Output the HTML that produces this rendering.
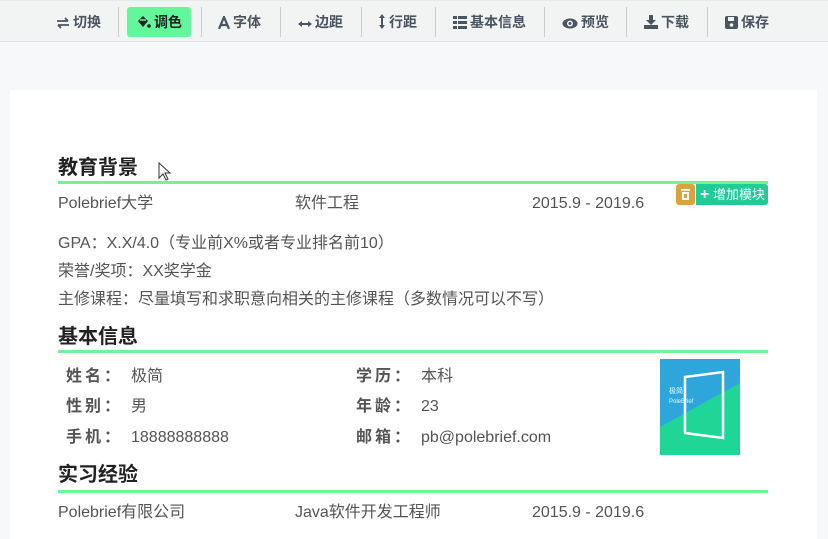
<!DOCTYPE html>
<html><head><meta charset="utf-8"><style>
*{margin:0;padding:0;box-sizing:border-box}
html,body{width:828px;height:539px;overflow:hidden}
body{background:#f7f8f9;font-family:"Liberation Sans","Noto Sans CJK SC",sans-serif;position:relative;color:#555}
.tb{position:absolute;left:0;top:0;width:828px;height:42px;background:#f2f4f3;border-bottom:1px solid #e2e4e4;border-top:1px solid #e8eaea}
.it{position:absolute;top:6px;height:30px;line-height:30px;font-size:14px;font-weight:bold;color:#4a5560;white-space:nowrap}
.it svg{vertical-align:-2px;margin-right:3px}
.sep{position:absolute;top:6px;width:1px;height:30px;background:#c9cdcd}
.act{background:#62f79a;border-radius:3px;color:#222;padding:0 9px}
.page{position:absolute;left:10px;top:90px;width:807px;height:449px;background:#fff}
.a{position:absolute;white-space:nowrap}
.h{font-size:20px;font-weight:bold;color:#222;left:58px;line-height:24px}
.line{position:absolute;left:58px;width:710px;height:3px;background:#6ef59a}
.t{font-size:16px;color:#555;line-height:20px}
.l{font-size:16px;font-weight:bold;color:#555;letter-spacing:3px;line-height:20px}
</style></head><body>
<div class="tb">
<div class="it" style="left:56px"><svg width="14" height="12" viewBox="0 0 14 12"><path d="M1 4h11M9 1l3 3M13 8H2M5 11L2 8" stroke="#4a5560" stroke-width="1.8" fill="none"/></svg>切换</div>
<div class="sep" style="left:118px"></div>
<div class="it act" style="left:127px"><svg width="15" height="14" viewBox="0 0 15 14"><path d="M2 6l5-5 5 5-5 6z" fill="#222"/><path d="M4 5h6" stroke="#62f79a" stroke-width="1.5"/><circle cx="13" cy="11" r="1.8" fill="#222"/></svg>调色</div>
<div class="sep" style="left:201px"></div>
<div class="it" style="left:218px"><svg width="12" height="13" viewBox="0 0 12 13"><path d="M1 13L6 1l5 12M3 9h6" stroke="#4a5560" stroke-width="2.2" fill="none"/></svg>字体</div>
<div class="sep" style="left:280px"></div>
<div class="it" style="left:298px"><svg width="14" height="10" viewBox="0 0 14 10"><path d="M1 5h12" stroke="#4a5560" stroke-width="2"/><path d="M0 5l4-3v6zM14 5l-4-3v6z" fill="#4a5560"/></svg>边距</div>
<div class="sep" style="left:361px"></div>
<div class="it" style="left:378px"><svg width="8" height="15" viewBox="0 0 8 15"><path d="M4 2v11" stroke="#4a5560" stroke-width="2"/><path d="M4 0l3 4H1zM4 15l3-4H1z" fill="#4a5560"/></svg>行距</div>
<div class="sep" style="left:435px"></div>
<div class="it" style="left:453px"><svg width="14" height="13" viewBox="0 0 14 13"><path d="M0 0h4v3H0zM5 0h9v3H5zM0 5h4v3H0zM5 5h9v3H5zM0 10h4v3H0zM5 10h9v3H5z" fill="#4a5560"/></svg>基本信息</div>
<div class="sep" style="left:544px"></div>
<div class="it" style="left:562px"><svg width="16" height="11" viewBox="0 0 16 11"><ellipse cx="8" cy="5.5" rx="7.5" ry="5" fill="#4a5560"/><circle cx="8" cy="5.5" r="3" fill="#f2f4f3"/><circle cx="8" cy="5.5" r="1.5" fill="#4a5560"/></svg>预览</div>
<div class="sep" style="left:626px"></div>
<div class="it" style="left:644px"><svg width="14" height="14" viewBox="0 0 14 14"><path d="M5 0h4v5h3l-5 5-5-5h3z" fill="#4a5560"/><path d="M0 10h14v4H0z" fill="#4a5560"/></svg>下载</div>
<div class="sep" style="left:707px"></div>
<div class="it" style="left:725px"><svg width="13" height="13" viewBox="0 0 13 13"><rect width="13" height="13" rx="2" fill="#4a5560"/><rect x="3" y="1" width="6" height="4" fill="#f2f4f3"/><circle cx="6.5" cy="9" r="1.8" fill="#f2f4f3"/></svg>保存</div>
</div>
<div class="page"></div>
<div class="a h" style="top:156px">教育背景</div>
<svg class="a" style="left:158px;top:162px" width="14" height="20" viewBox="0 0 14 20"><path d="M1 1v15l4-4 3 6 2-1-3-6h5z" fill="#fff" stroke="#333"/></svg>
<div class="line" style="top:181px"></div>
<div class="a" style="left:676px;top:184px;width:19px;height:21px;background:#d9a440;border-radius:3px"><svg style="position:absolute;left:5px;top:5px" width="9" height="11" viewBox="0 0 9 11"><path d="M0 1h9M3 0h3" stroke="#fff" stroke-width="1.4"/><rect x="1" y="3" width="7" height="8" fill="#fff"/><rect x="3" y="5" width="3" height="4" fill="#d9a440"/></svg></div>
<div class="a" style="left:696px;top:184px;width:72px;height:21px;background:#1fcc96;border-radius:0 3px 3px 0;color:#fff;font-size:13px;line-height:21px;padding-left:4px"><b style="font-size:16px">+</b> 增加模块</div>
<div class="a t" style="left:58px;top:194px">Polebrief大学</div>
<div class="a t" style="left:295px;top:194px">软件工程</div>
<div class="a t" style="left:532px;top:194px">2015.9 - 2019.6</div>
<div class="a t" style="left:58px;top:234px">GPA：X.X/4.0（专业前X%或者专业排名前10）</div>
<div class="a t" style="left:58px;top:262px">荣誉/奖项：XX奖学金</div>
<div class="a t" style="left:58px;top:290px">主修课程：尽量填写和求职意向相关的主修课程（多数情况可以不写）</div>
<div class="a h" style="top:325px">基本信息</div>
<div class="line" style="top:350px"></div>
<div class="a l" style="left:66px;top:367px">姓名：</div><div class="a t" style="left:131px;top:367px">极简</div>
<div class="a l" style="left:66px;top:397px">性别：</div><div class="a t" style="left:131px;top:397px">男</div>
<div class="a l" style="left:66px;top:428px">手机：</div><div class="a t" style="left:131px;top:428px">18888888888</div>
<div class="a l" style="left:356px;top:367px">学历：</div><div class="a t" style="left:421px;top:367px">本科</div>
<div class="a l" style="left:356px;top:397px">年龄：</div><div class="a t" style="left:421px;top:397px">23</div>
<div class="a l" style="left:356px;top:428px">邮箱：</div><div class="a t" style="left:421px;top:428px">pb@polebrief.com</div>
<svg class="a" style="left:660px;top:359px" width="80" height="96" viewBox="0 0 80 96"><rect width="80" height="96" fill="#1fd696"/><path d="M0 0h80v24L0 68z" fill="#2ea6dc"/><path d="M25 18l38-5v66l-38-5z" fill="none" stroke="#fff" stroke-width="2.5"/><text x="9" y="34" font-size="7" fill="#dff" font-family="Liberation Sans,Noto Sans CJK SC,sans-serif">极简</text><text x="9" y="44" font-size="6" fill="#dff" font-family="Liberation Sans,sans-serif">PoleBrief</text></svg>
<div class="a h" style="top:463px">实习经验</div>
<div class="line" style="top:490px"></div>
<div class="a t" style="left:58px;top:503px">Polebrief有限公司</div>
<div class="a t" style="left:295px;top:503px">Java软件开发工程师</div>
<div class="a t" style="left:532px;top:503px">2015.9 - 2019.6</div>
</body></html>
